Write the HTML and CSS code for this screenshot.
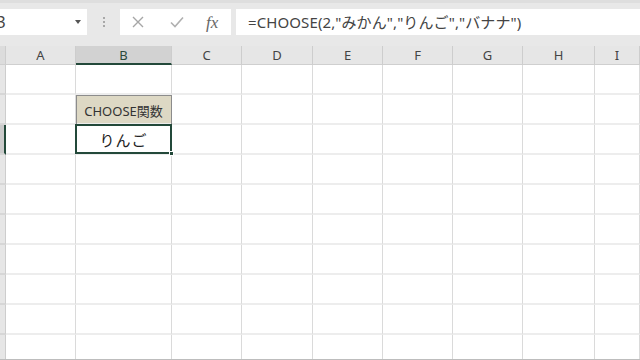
FILE: index.html
```html
<!DOCTYPE html>
<html lang="ja">
<head>
    <meta charset="UTF-8">
    <meta name="viewport" content="width=device-width, initial-scale=1.0">
    <title>CHOOSE関数</title>
    <link rel="stylesheet" href="styles.css">
</head>
<body>
    <div class="toolbar">
        <div class="name-box">
            <span class="name-text">B3</span>
            <span class="drop-arrow"></span>
        </div>
        <div class="grip"><i></i><i></i><i></i></div>
        <div class="fx-box">
            <svg class="icon" width="12" height="12" viewBox="0 0 12 12"><path d="M1 1 L11 11 M11 1 L1 11" stroke="#a6a6a6" stroke-width="1.4" fill="none"/></svg>
            <svg class="icon" width="14" height="12" viewBox="0 0 14 12"><path d="M1 6.5 L5 10.5 L13 1.5" stroke="#b0b0b0" stroke-width="1.6" fill="none"/></svg>
            <span class="fx">fx</span>
        </div>
        <div class="formula">=CHOOSE(2,"みかん","りんご","バナナ")</div>
    </div>

    <div class="sheet">
        <div class="grid">
            <div class="hd corner"></div><div class="hd">A</div><div class="hd active-col">B</div><div class="hd">C</div><div class="hd">D</div><div class="hd">E</div><div class="hd">F</div><div class="hd">G</div><div class="hd">H</div><div class="hd">I</div>

            <div class="rh"></div><div class="c"></div><div class="c"></div><div class="c"></div><div class="c"></div><div class="c"></div><div class="c"></div><div class="c"></div><div class="c"></div><div class="c"></div>
            <div class="rh"></div><div class="c"></div><div class="c label-cell">CHOOSE関数</div><div class="c"></div><div class="c"></div><div class="c"></div><div class="c"></div><div class="c"></div><div class="c"></div><div class="c"></div>
            <div class="rh active-row"></div><div class="c"></div><div class="c selected">りんご<span class="handle"></span></div><div class="c"></div><div class="c"></div><div class="c"></div><div class="c"></div><div class="c"></div><div class="c"></div><div class="c"></div>
            <div class="rh"></div><div class="c"></div><div class="c"></div><div class="c"></div><div class="c"></div><div class="c"></div><div class="c"></div><div class="c"></div><div class="c"></div><div class="c"></div>
            <div class="rh"></div><div class="c"></div><div class="c"></div><div class="c"></div><div class="c"></div><div class="c"></div><div class="c"></div><div class="c"></div><div class="c"></div><div class="c"></div>
            <div class="rh"></div><div class="c"></div><div class="c"></div><div class="c"></div><div class="c"></div><div class="c"></div><div class="c"></div><div class="c"></div><div class="c"></div><div class="c"></div>
            <div class="rh"></div><div class="c"></div><div class="c"></div><div class="c"></div><div class="c"></div><div class="c"></div><div class="c"></div><div class="c"></div><div class="c"></div><div class="c"></div>
            <div class="rh"></div><div class="c"></div><div class="c"></div><div class="c"></div><div class="c"></div><div class="c"></div><div class="c"></div><div class="c"></div><div class="c"></div><div class="c"></div>
            <div class="rh"></div><div class="c"></div><div class="c"></div><div class="c"></div><div class="c"></div><div class="c"></div><div class="c"></div><div class="c"></div><div class="c"></div><div class="c"></div>
            <div class="rh"></div><div class="c"></div><div class="c"></div><div class="c"></div><div class="c"></div><div class="c"></div><div class="c"></div><div class="c"></div><div class="c"></div><div class="c"></div>
        </div>
    </div>
</body>
</html>
```

FILE: styles.css
```css
:root {
    --bar: #e8e8e8;
    --head: #e6e6e6;
    --grid-v: #dadada;
    --grid-h: #ededed;
    --select: #23493a;
    --text: #333;
}

* {
    box-sizing: border-box;
}

body {
    margin: 0;
    width: 640px;
    height: 360px;
    overflow: hidden;
    background: #fff;
    font-family: "Noto Sans", "Noto Sans CJK JP", sans-serif;
    color: var(--text);
}

/* formula bar */
.toolbar {
    height: 46px;
    background: var(--bar);
    border-top: 3px solid #dedede;
    padding-top: 6px;
    display: flex;
    align-items: flex-start;
}

.name-box {
    width: 107px;
    height: 26px;
    margin-left: -20px;
    background: #fff;
    display: flex;
    align-items: center;
    padding: 0 6px;
    font-size: 16px;
}

.name-text {
    flex: 1;
    color: #444;
}

.drop-arrow {
    width: 0;
    height: 0;
    border-left: 3.5px solid transparent;
    border-right: 3.5px solid transparent;
    border-top: 4px solid #555;
}

.grip {
    width: 33px;
    height: 26px;
    display: flex;
    flex-direction: column;
    align-items: center;
    justify-content: center;
    gap: 2px;
}

.grip i {
    width: 2px;
    height: 2px;
    background: #a8a8a8;
}

.fx-box {
    width: 111px;
    height: 26px;
    background: #fff;
    display: flex;
    align-items: center;
    padding-left: 12px;
}

.fx-box .icon:first-child {
    margin-right: 26px;
}

.fx-box .icon:nth-child(2) {
    margin-right: 22px;
}

.fx {
    font-family: "Liberation Serif", serif;
    font-style: italic;
    font-size: 17px;
    color: #666;
    line-height: 1;
}

.formula {
    flex: 1;
    height: 26px;
    margin-left: 5px;
    background: #fff;
    padding-left: 12px;
    font-size: 15px;
    line-height: 26px;
    color: #444;
    letter-spacing: 0.1px;
    white-space: nowrap;
}

/* sheet */
.sheet {
    height: 314px;
    overflow: hidden;
    border-bottom: 1px solid #bdbdbd;
}

.grid {
    display: grid;
    grid-template-columns: 6px 70px 96px 70px 71px 70px 70px 70px 72px 1fr;
    grid-template-rows: 19px repeat(10, 30px);
}

.hd {
    background: var(--head);
    border-right: 1px solid #cdcdcd;
    border-bottom: 1px solid #cfcfcf;
    font-size: 13px;
    color: #444;
    display: flex;
    align-items: center;
    justify-content: center;
}

.hd.corner {
    background: #dcdcdc;
}

.hd.active-col {
    background: #d2d2d2;
    border-bottom: 2px solid var(--select);
    color: #2c4a3c;
}

.rh {
    background: var(--head);
    border-right: 1px solid #cdcdcd;
    border-bottom: 2px solid #d6d6d6;
}

.rh.active-row {
    background: #cbcbcb;
    border-right: 2px solid var(--select);
}

.c {
    border-right: 1px solid var(--grid-v);
    border-bottom: 2px solid var(--grid-h);
    display: flex;
    align-items: center;
    justify-content: center;
}

.label-cell {
    background: #ddd8c4;
    font-size: 13px;
    color: #333;
    outline: 1px solid #8c8c8c;
    outline-offset: -1px;
    padding-top: 2px;
}

.selected {
    position: relative;
    font-size: 15px;
    letter-spacing: 1px;
    color: #222;
}

.selected::after {
    content: '';
    position: absolute;
    inset: -1px;
    border: 2px solid var(--select);
}

.handle {
    position: absolute;
    right: -3px;
    bottom: -3px;
    width: 5px;
    height: 5px;
    background: var(--select);
    border: 1px solid #fff;
    z-index: 1;
}
```
